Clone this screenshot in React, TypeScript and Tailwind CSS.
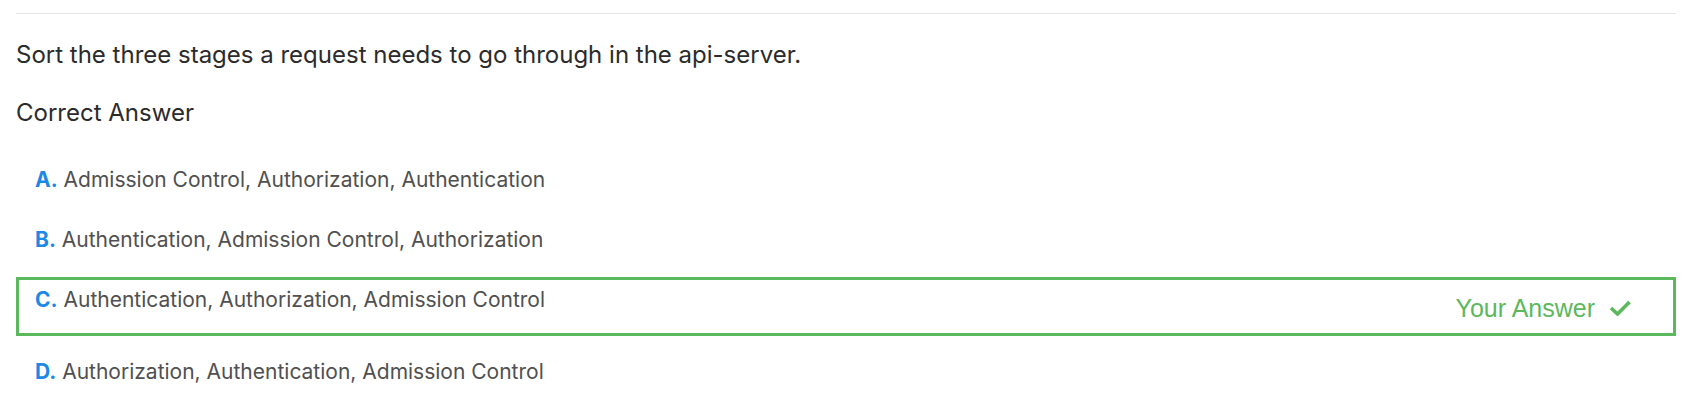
import React from "react";

const options = [
  { letter: "A.", text: "Admission Control, Authorization, Authentication" },
  { letter: "B.", text: "Authentication, Admission Control, Authorization" },
  { letter: "C.", text: "Authentication, Authorization, Admission Control", mine: true },
  { letter: "D.", text: "Authorization, Authentication, Admission Control" },
];

export default function App() {
  return (
    <div className="bg-white w-[1689px] h-[400px] pl-4 pr-[13px] pt-[13px] font-['Inter',sans-serif]">
      <div className="h-px bg-[#e6e6e6]" />
      <p className="mt-[26px] text-[24px] leading-[30px] text-[#2b2b2b]">
        Sort the three stages a request needs to go through in the api-server.
      </p>
      <p className="mt-[28px] text-[24px] leading-[30px] text-[#2b2b2b]">Correct Answer</p>
      <div className="mt-[29px] flex flex-col">
        {options.map((o) => (
          <div
            key={o.letter}
            className={
              "flex items-start justify-between pl-4 pr-[42px] pt-[7px] border-[3px] " +
              (o.mine ? "h-[59px] border-[#5cb85c] mb-[13px]" : "h-[60px] border-transparent")
            }
          >
            <div className="text-[21px] leading-[26px] text-[#505050]">
              <span className="font-bold text-[#1e88e5]">{o.letter}</span> {o.text}
            </div>
            {o.mine && (
              <div className="flex items-center gap-[14px] mt-[7px] text-[25px] leading-[28px] text-[#5cb85c] font-['Liberation_Sans',Arial,sans-serif]">
                Your Answer
                <svg width="22" height="16" viewBox="0 0 22 16" fill="none">
                  <path d="M2 8 L8.5 14 L20.5 2" stroke="#5cb85c" strokeWidth="3.6" strokeLinecap="butt" strokeLinejoin="miter" />
                </svg>
              </div>
            )}
          </div>
        ))}
      </div>
    </div>
  );
}
